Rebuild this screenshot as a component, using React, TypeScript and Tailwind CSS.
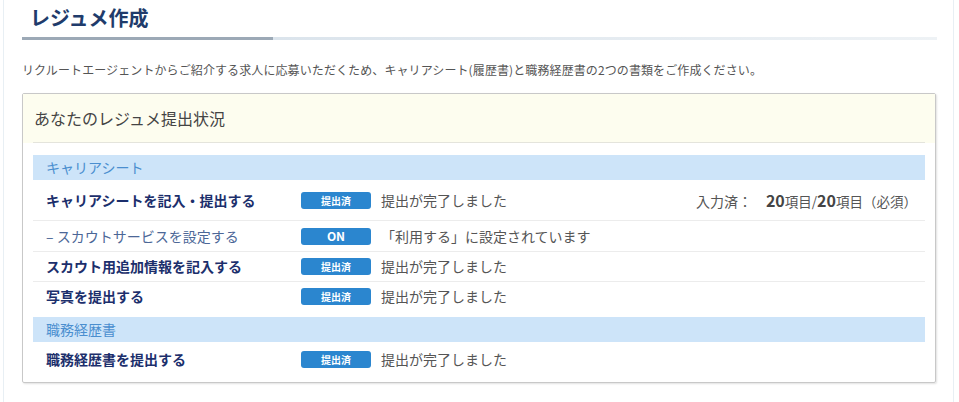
const font = { fontFamily: '"Noto Sans CJK JP", "Noto Sans", sans-serif' };

type Row = {
  label: string;
  badge: string;
  status: string;
  sub?: boolean;
  h: string;
  extra?: boolean;
  divider?: boolean;
};

const careerRows: Row[] = [
  { label: "キャリアシートを記入・提出する", badge: "提出済", status: "提出が完了しました", h: "h-[41px]", extra: true, divider: true },
  { label: "– スカウトサービスを設定する", badge: "ON", status: "「利用する」に設定されています", sub: true, h: "h-[31px]", divider: true },
  { label: "スカウト用追加情報を記入する", badge: "提出済", status: "提出が完了しました", h: "h-[30px]", divider: true },
  { label: "写真を提出する", badge: "提出済", status: "提出が完了しました", h: "h-[29px]" },
];

function Badge({ text }: { text: string }) {
  return (
    <span
      className={`flex h-[17px] w-[70px] shrink-0 items-center justify-center rounded-[3px] bg-[#2b86cf] font-bold text-white ${
        text === "ON" ? "text-[12px]" : "text-[10px]"
      }`}
    >
      {text}
    </span>
  );
}

function StatusRow({ row }: { row: Row }) {
  return (
    <div className={`flex items-center ${row.h} ${row.divider ? "border-b border-[#ececec]" : ""}`}>
      <div
        className={`w-[268px] shrink-0 pl-[13px] text-[14px] ${
          row.sub ? "font-normal text-[#4c6797]" : "font-bold text-[#1c2f6c]"
        }`}
      >
        {row.label}
      </div>
      <Badge text={row.badge} />
      <span className="ml-[10px] text-[14px] text-[#555]">{row.status}</span>
      {row.extra && (
        <div className="ml-auto flex items-baseline pr-[8px] text-[#555]">
          <span className="text-[14px]">入力済：</span>
          <span className="ml-[14px] text-[16px] font-bold text-[#444]">20</span>
          <span className="text-[13.5px]">項目/</span>
          <span className="text-[16px] font-bold text-[#444]">20</span>
          <span className="text-[13.5px]">項目（必須）</span>
        </div>
      )}
    </div>
  );
}

function SectionBand({ title }: { title: string }) {
  return (
    <div className="flex h-[25px] items-center bg-[#cde4f9] pl-[13px] text-[14px] text-[#4a8ecf]">{title}</div>
  );
}

export default function App() {
  return (
    <div style={font} className="h-[402px] w-[959px] overflow-hidden bg-white">
      <div className="ml-[3px] mr-[5px] h-full border-x border-[#e8eff4] pl-[18px] pr-[16px]">
        <h1 className="pl-[8px] pt-[5px] text-[20px] font-bold leading-[26px] text-[#203b6b]">レジュメ作成</h1>
        <div className="mt-[6px] flex h-[3px]">
          <div className="w-[251px] bg-[#9ca9b6]" />
          <div className="flex-1 bg-gradient-to-r from-[#dbe4ec] to-[#eef2f5]" />
        </div>
        <p className="mt-[21px] text-[12px] leading-[18px] tracking-[0.1px] text-[#555]">
          リクルートエージェントからご紹介する求人に応募いただくため、キャリアシート(履歴書)と職務経歴書の2つの書類をご作成ください。
        </p>
        <div className="mt-[14px] w-[914px] rounded-[2px] border border-[#c8c8c8] shadow-[1px_1px_2px_rgba(0,0,0,0.12)]">
          <div className="bg-[#fdfdef] px-[10px]">
            <div className="flex h-[49px] items-center border-b border-[#e4e4dc] pl-[1px] text-[16px] text-[#444]">
              あなたのレジュメ提出状況
            </div>
          </div>
          <div className="px-[10px] pb-[6px] pt-[12px]">
            <SectionBand title="キャリアシート" />
            {careerRows.map((row) => (
              <StatusRow key={row.label} row={row} />
            ))}
            <div className="mt-[6px]">
              <SectionBand title="職務経歴書" />
            </div>
            <StatusRow row={{ label: "職務経歴書を提出する", badge: "提出済", status: "提出が完了しました", h: "h-[34px]" }} />
          </div>
        </div>
      </div>
    </div>
  );
}
